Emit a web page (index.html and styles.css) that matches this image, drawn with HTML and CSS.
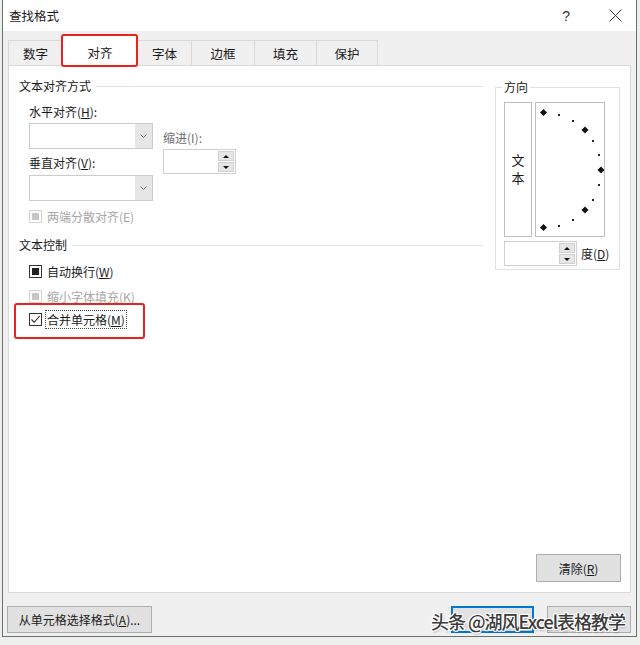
FILE: index.html
```html
<!DOCTYPE html>
<html lang="zh-CN">
<head>
  <meta charset="UTF-8">
  <meta name="viewport" content="width=device-width, initial-scale=1.0">
  <title>查找格式</title>
  <link rel="stylesheet" href="styles.css">
</head>
<body>
  <div class="dialog">
    <div class="titlebar">
      <span class="title">查找格式</span>
      <span class="help">?</span>
      <span class="close">
        <svg width="13" height="13" viewBox="0 0 13 13"><path d="M0.5 0.5L12.5 12.5M12.5 0.5L0.5 12.5" stroke="#333" stroke-width="1" fill="none"/></svg>
      </span>
    </div>

    <div class="tabs">
      <div class="tab t1">数字</div>
      <div class="tab t2 active">对齐</div>
      <div class="tab t3">字体</div>
      <div class="tab t4">边框</div>
      <div class="tab t5">填充</div>
      <div class="tab t6">保护</div>
    </div>

    <div class="page">
      <div class="page_top">
        <div class="left_col">
          <div class="group_head"><span>文本对齐方式</span><i class="rule"></i></div>

          <div class="align_block">
            <div class="align_main">
              <div class="label">水平对齐(<u>H</u>):</div>
              <div class="combo combo1">
                <span class="combo_field"></span>
                <span class="combo_btn"><svg width="7" height="4" viewBox="0 0 7 4"><path d="M0.5 0.5L3.5 3.5L6.5 0.5" stroke="#707070" fill="none"/></svg></span>
              </div>
              <div class="label label_v">垂直对齐(<u>V</u>):</div>
              <div class="combo combo2">
                <span class="combo_field"></span>
                <span class="combo_btn"><svg width="7" height="4" viewBox="0 0 7 4"><path d="M0.5 0.5L3.5 3.5L6.5 0.5" stroke="#707070" fill="none"/></svg></span>
              </div>
              <div class="check_row disabled justify_row">
                <span class="box mixed"></span><span>两端分散对齐(E)</span>
              </div>
            </div>
            <div class="indent">
              <div class="label muted">缩进(I):</div>
              <div class="spin">
                <span class="spin_field"></span>
                <span class="spin_btns"><span class="up"></span><span class="down"></span></span>
              </div>
            </div>
          </div>

          <div class="group_head control_head"><span>文本控制</span><i class="rule"></i></div>

          <div class="check_row wrap_row">
            <span class="box mixed"></span><span>自动换行(<u>W</u>)</span>
          </div>
          <div class="check_row disabled shrink_row">
            <span class="box mixed"></span><span>缩小字体填充(K)</span>
          </div>
          <div class="check_row merge_row">
            <span class="box checked">
              <svg width="11" height="11" viewBox="0 0 11 11"><path d="M1.5 5.5L4.2 8.3L9.8 2" stroke="#222" stroke-width="1.1" fill="none"/></svg>
            </span><span class="focus">合并单元格(<u>M</u>)</span>
          </div>
        </div>

        <div class="orient">
          <div class="orient_label">方向</div>
          <div class="orient_boxes">
            <div class="vtext"><span>文</span><span>本</span></div>
            <div class="dial">
              <svg width="68" height="133" viewBox="0 0 68 133">
                <!-- half dial, center at (8,67), radius 57; big marks every 45deg, small ones every 15deg -->
                <g fill="#111">
                  <rect x="5" y="7" width="5" height="5" transform="rotate(45 7.5 9.5)"/>
                  <rect x="46.5" y="24.5" width="5" height="5" transform="rotate(45 49 27)"/>
                  <rect x="62.5" y="64.5" width="5" height="5" transform="rotate(45 65 67)"/>
                  <rect x="46.5" y="104.5" width="5" height="5" transform="rotate(45 49 107)"/>
                  <rect x="5" y="122" width="5" height="5" transform="rotate(45 7.5 124.5)"/>
                </g>
                <g fill="#222">
                  <rect x="22" y="11" width="2" height="2"/>
                  <rect x="36" y="17" width="2" height="2"/>
                  <rect x="56" y="37" width="2" height="2"/>
                  <rect x="62" y="51" width="2" height="2"/>
                  <rect x="62" y="81" width="2" height="2"/>
                  <rect x="56" y="96" width="2" height="2"/>
                  <rect x="36" y="116" width="2" height="2"/>
                  <rect x="22" y="122" width="2" height="2"/>
                </g>
              </svg>
            </div>
          </div>
          <div class="degree_row">
            <div class="spin deg_spin">
              <span class="spin_field"></span>
              <span class="spin_btns"><span class="up"></span><span class="down"></span></span>
            </div>
            <span class="label">度(<u>D</u>)</span>
          </div>
        </div>
      </div>

      <div class="page_foot">
        <button type="button" class="btn clear_btn">清除(<u>R</u>)</button>
      </div>
    </div>

    <div class="footer">
      <button type="button" class="btn pick_btn">从单元格选择格式(<u>A</u>)...</button>
      <span class="spacer"></span>
      <button type="button" class="btn ok_btn"></button>
      <button type="button" class="btn cancel_btn"></button>
    </div>
  </div>

  <div class="watermark">头条 @湖风Excel表格教学</div>
</body>
</html>
```

FILE: styles.css
```css
*, *::before, *::after{
  margin: 0;
  padding: 0;
  box-sizing: border-box;
}
body{
  width: 640px;
  height: 645px;
  background-color: #eef0ee;
  font-family: "Noto Sans CJK SC", "Noto Sans", sans-serif;
  font-size: 12px;
  color: #1a1a1a;
  position: relative;
  overflow: hidden;
}
u{
  text-decoration: underline;
  text-underline-offset: 1px;
}

/* dialog frame */
.dialog{
  margin-left: 2px;
  width: 635px;
  height: 637px;
  background-color: #f0f0f0;
  border: 1px solid #6b6f6e;
  border-top: none;
  display: flex;
  flex-direction: column;
}
.titlebar{
  height: 31px;
  background-color: #fff;
  display: flex;
  align-items: center;
  padding-left: 6px;
}
.title{
  font-size: 12.5px;
  line-height: 17px;
  flex: 1;
}
.help{
  font-size: 14px;
  color: #333;
  margin-right: 39px;
  font-family: "Liberation Sans", sans-serif;
}
.close{
  display: flex;
  margin-right: 14px;
}

/* tab strip */
.tabs{
  height: 34px;
  display: flex;
  align-items: flex-end;
  padding-left: 5px;
}
.tab{
  height: 25px;
  border: 1px solid #d9d9d9;
  border-bottom: none;
  margin-right: -1px;
  display: flex;
  align-items: center;
  justify-content: center;
  font-size: 12.5px;
  background-color: #f0f0f0;
}
.t1{ width: 55px; }
.t2{ width: 76px; }
.t3{ width: 55px; }
.t4{ width: 64px; }
.t5{ width: 63px; }
.t6{ width: 62px; }
.tab.active{
  height: 31px;
  margin-bottom: -1px;
  background-color: #fff;
  position: relative;
  z-index: 2;
  padding-top: 2px;
}
.tab.active::after{
  content: '';
  position: absolute;
  top: -2px;
  left: -2px;
  right: -1px;
  bottom: -1px;
  border: 2px solid #e8231d;
  border-radius: 3px;
}

/* tab page */
.page{
  height: 528px;
  margin: 0 5px;
  background-color: #fff;
  border: 1px solid #d9d9d9;
  position: relative;
  z-index: 1;
  display: flex;
  flex-direction: column;
  padding: 11px 9px 0 10px;
}
.page_top{
  display: flex;
  align-items: flex-start;
}
.left_col{
  width: 464px;
}
.label{
  line-height: 17px;
  height: 17px;
  white-space: nowrap;
}
.muted{
  color: #6f6f6f;
}
.group_head{
  display: flex;
  align-items: center;
  height: 17px;
  line-height: 17px;
}
.rule{
  flex: 1;
  border-top: 1px solid #e3e3e3;
  margin-left: 5px;
  margin-top: 1px;
}
.control_head{
  margin-top: 11px;
}

/* alignment block */
.align_block{
  display: flex;
  margin-top: 9px;
  padding-left: 10px;
}
.align_main{
  width: 124px;
}
.combo{
  height: 26px;
  border: 1px solid #cbcbcb;
  display: flex;
  background-color: #fff;
}
.combo1{ margin-top: 3px; }
.combo2{ margin-top: 4px; }
.label_v{ margin-top: 5px; }
.combo_field{
  flex: 1;
}
.combo_btn{
  width: 17px;
  background-color: #e6e6e6;
  display: flex;
  align-items: center;
  justify-content: center;
}
.indent{
  margin-left: 10px;
  padding-top: 26px;
}
.spin{
  width: 73px;
  height: 25px;
  margin-top: 3px;
  border: 1px solid #d0d0d0;
  display: flex;
  background-color: #fff;
}
.spin_field{
  flex: 1;
}
.spin_btns{
  width: 17px;
  display: flex;
  flex-direction: column;
  gap: 1px;
  padding: 1px 1px 1px 0;
}
.spin_btns span{
  flex: 1;
  background-color: #e6e6e6;
  border: 1px solid #cfcfcf;
  display: flex;
  align-items: center;
  justify-content: center;
}
.spin_btns .up::before{
  content: '';
  border-left: 3px solid transparent;
  border-right: 3px solid transparent;
  border-bottom: 3px solid #111;
}
.spin_btns .down::before{
  content: '';
  border-left: 3px solid transparent;
  border-right: 3px solid transparent;
  border-top: 3px solid #111;
}

/* check boxes */
.check_row{
  display: flex;
  align-items: center;
  gap: 5px;
  height: 17px;
  line-height: 17px;
  padding-left: 10px;
  white-space: nowrap;
}
.box{
  width: 13px;
  height: 13px;
  border: 1px solid #333;
  background-color: #fff;
  display: flex;
  align-items: center;
  justify-content: center;
}
.box.mixed::before{
  content: '';
  width: 7px;
  height: 7px;
  background-color: #222;
}
.check_row.disabled{
  color: #a6a6a6;
}
.check_row.disabled .box{
  border-color: #d4d4d4;
}
.check_row.disabled .box.mixed::before{
  background-color: #c6c6c6;
}
.justify_row{
  margin-top: 7px;
  padding-left: 0;
}
.wrap_row{ margin-top: 10px; }
.shrink_row{ margin-top: 8px; }
.merge_row{
  margin-top: 6px;
  position: relative;
}
.merge_row::after{
  content: '';
  position: absolute;
  top: -8px;
  left: -5px;
  width: 131px;
  height: 36px;
  border: 2px solid #e8231d;
  border-radius: 3px;
}
.focus{
  outline: 1px dotted #444;
  outline-offset: 0;
  padding: 0 1px;
  margin-left: -1px;
}

/* orientation group */
.orient{
  width: 125px;
  height: 183px;
  margin-left: 12px;
  margin-top: 10px;
  border: 1px solid #e0e0e0;
  padding-left: 8px;
}
.orient_label{
  width: fit-content;
  height: 17px;
  line-height: 17px;
  margin-top: -10px;
  margin-left: -2px;
  padding: 0 2px;
  background-color: #fff;
}
.orient_boxes{
  display: flex;
  gap: 3px;
  margin-top: 7px;
}
.vtext{
  width: 28px;
  height: 135px;
  border: 1px solid #bdbdbd;
  display: flex;
  flex-direction: column;
  align-items: center;
  justify-content: center;
  font-size: 13px;
  line-height: 18px;
  padding-bottom: 2px;
}
.dial{
  width: 70px;
  height: 135px;
  border: 1px solid #bdbdbd;
  display: flex;
}
.degree_row{
  display: flex;
  align-items: center;
  gap: 4px;
  margin-top: 4px;
}
.deg_spin{
  margin-top: 0;
}

/* buttons */
.btn{
  font-family: inherit;
  font-size: 12px;
  color: #1a1a1a;
  background-color: #e1e1e1;
  border: 1px solid #adadad;
  display: flex;
  align-items: center;
  justify-content: center;
  white-space: nowrap;
}
.page_foot{
  margin-top: auto;
  display: flex;
  justify-content: flex-end;
  padding: 0 0 10px;
}
.clear_btn{
  width: 85px;
  height: 28px;
}
.footer{
  flex: 1;
  display: flex;
  align-items: flex-start;
  padding: 13px 5px 0 4px;
}
.pick_btn{
  width: 145px;
  height: 27px;
}
.spacer{
  flex: 1;
}
.ok_btn{
  width: 83px;
  height: 27px;
  border: 1px solid #0078d7;
  box-shadow: inset 0 0 0 1px #0078d7;
  margin-right: 13px;
}
.cancel_btn{
  width: 84px;
  height: 27px;
}

/* site stamp over the lower right corner */
.watermark{
  position: absolute;
  left: 431px;
  top: 608px;
  font-family: "Noto Sans CJK SC", "Noto Sans", sans-serif;
  font-size: 18px;
  font-weight: 500;
  line-height: 26px;
  letter-spacing: -1px;
  color: #3a3a3a;
  white-space: nowrap;
  text-shadow:
    1px 0 0 #fff, -1px 0 0 #fff, 0 1px 0 #fff, 0 -1px 0 #fff,
    1px 1px 0 #fff, -1px -1px 0 #fff, 1px -1px 0 #fff, -1px 1px 0 #fff,
    1px 2px 2px rgba(0, 0, 0, 0.25);
}
```
